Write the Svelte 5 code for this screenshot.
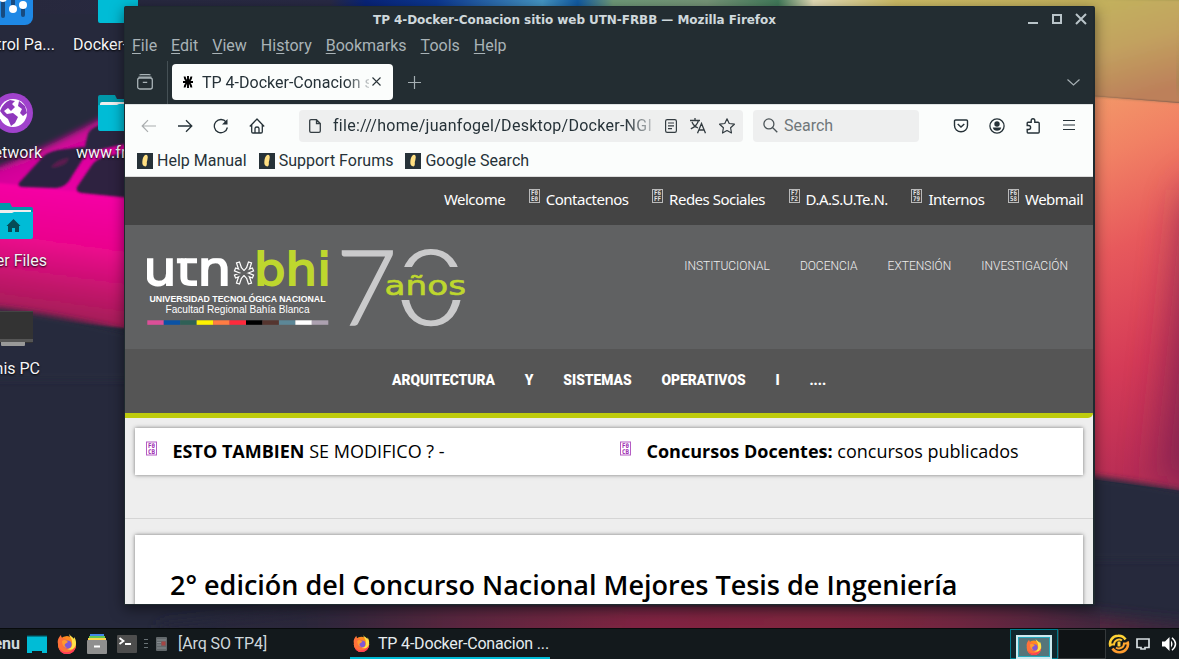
<script>
  const menus = [
    ['', 'F', 'ile'], ['', 'E', 'dit'], ['', 'V', 'iew'], ['Hi', 's', 'tory'],
    ['', 'B', 'ookmarks'], ['', 'T', 'ools'], ['', 'H', 'elp']
  ];
  const bookmarks = ['Help Manual', 'Support Forums', 'Google Search'];
  const quick = [
    { code: ['F0', 'E0'], label: 'Contactenos' },
    { code: ['F6', 'FF'], label: 'Redes Sociales' },
    { code: ['F7', 'F2'], label: 'D.A.S.U.Te.N.' },
    { code: ['F8', '79'], label: 'Internos' },
    { code: ['F6', '58'], label: 'Webmail' }
  ];
  const sections = ['INSTITUCIONAL', 'DOCENCIA', 'EXTENSIÓN', 'INVESTIGACIÓN'];
  const course = ['ARQUITECTURA', 'Y', 'SISTEMAS', 'OPERATIVOS', 'I', '....'];
  const stripes = ['#dc4f98', '#0a52a5', '#2f6056', '#fff200', '#ff7c43', '#ff2a3c', '#000', '#55352f', '#5c8797', '#fff', '#aca1b0'];
</script>

{#snippet hex(code, color)}
  <svg class="hex" width="11" height="14" viewBox="0 0 11 14" fill="none">
    <rect x=".5" y=".5" width="10" height="13" stroke={color} stroke-width="1" opacity=".75" />
    <text x="2" y="6.2" textLength="7" lengthAdjust="spacingAndGlyphs" fill={color}>{code[0]}</text>
    <text x="2" y="12.2" textLength="7" lengthAdjust="spacingAndGlyphs" fill={color}>{code[1]}</text>
  </svg>
{/snippet}

{#snippet fox(size)}
  <svg width={size} height={size} viewBox="0 0 20 20">
    <circle cx="10" cy="11" r="9" fill="#ff8a1f" />
    <path d="M1 10C0 6 2 3 4 1c0 2 1 3 2 3 2 0 3 1 4 2l-3 3 1 4 6 2 5-4c0 5-4 9-9 9S1 16 1 10Z" fill="#ff7139" />
    <path d="M2 14c4 6 12 6 17-2-1 5-4 8-9 8-4 0-7-2-8-6Z" fill="#ff3b58" />
    <path d="M12 0c1 4 3 4 3 8 1 5-2 7-5 7 5 2 9-1 9-6 0-3-1-5-2-6v2c-1-2-4-3-5-5Z" fill="#ffe14a" />
    <circle cx="10.5" cy="10.5" r="4" fill="#8059d6" />
    <path d="M5 7c2-2 4-1 6 1l-3 2c-1 1 0 3 2 4-3 0-5-3-5-7Z" fill="#ff9b2e" />
  </svg>
{/snippet}

{#snippet folder(home)}
  <svg width="40" height="36" viewBox="0 0 40 36">
    <path d="M0 2Q0 0 2 0H17L19 4H38Q40 4 40 6V20H0Z" fill="#0097a9" />
    <path d="M2 9Q2 7 4 7H38V18H2Z" fill="#eee" />
    <path d="M0 11Q0 10 1 10H19L21 9H40V34Q40 36 38 36H2Q0 36 0 34Z" fill="#00bcd6" />
    {#if home}<path d="M20.5 16L27.5 23H26V29H22V25H19V29H15V23H13.5Z" fill="#064b56" />{/if}
  </svg>
{/snippet}

<div class="desktop">
  <svg class="wallpaper" width="1179" height="659" viewBox="0 0 1179 659" preserveAspectRatio="none">
    <defs>
      <linearGradient id="sky" x1="0" x2="1"><stop offset="0" stop-color="#27283c" /><stop offset=".28" stop-color="#292a45" /><stop offset=".31" stop-color="#08247a" /><stop offset=".37" stop-color="#0c3892" /><stop offset=".46" stop-color="#4596c4" /><stop offset=".49" stop-color="#125ca4" /><stop offset=".52" stop-color="#6f9a79" /><stop offset=".6" stop-color="#769578" /><stop offset=".66" stop-color="#427b5b" /><stop offset=".69" stop-color="#e4ddb8" /><stop offset=".76" stop-color="#cdbc66" /><stop offset=".93" stop-color="#c2af5c" /><stop offset="1" stop-color="#98914b" /></linearGradient>
      <linearGradient id="warm" x1="0" y1="0" x2=".12" y2="1"><stop offset="0" stop-color="#f39a69" /><stop offset=".18" stop-color="#f18164" /><stop offset=".42" stop-color="#e7595c" /><stop offset=".72" stop-color="#d53b57" /><stop offset="1" stop-color="#b82d55" /></linearGradient>
      <linearGradient id="olive" x1="0" y1="0" x2=".3" y2="1"><stop offset="0" stop-color="#c3b35d" /><stop offset=".5" stop-color="#c2a25f" /><stop offset="1" stop-color="#bd805a" /></linearGradient>
      <linearGradient id="pink" x1="0" y1="0" x2="-.15" y2="1"><stop offset="0" stop-color="#f500a4" /><stop offset=".35" stop-color="#ea078c" /><stop offset=".65" stop-color="#be1768" /><stop offset="1" stop-color="#8a2347" /></linearGradient>
      <linearGradient id="glow" x1="0" y1="0" x2=".5" y2="1"><stop offset="0" stop-color="#6c1a6e" /><stop offset=".35" stop-color="#b80f8c" /><stop offset=".7" stop-color="#e000a0" /><stop offset="1" stop-color="#f000a5" /></linearGradient>
      <linearGradient id="under" x1="0" x2="1"><stop offset="0" stop-color="#26283b" /><stop offset=".14" stop-color="#2c273b" /><stop offset=".29" stop-color="#5b263f" /><stop offset=".48" stop-color="#802442" /><stop offset=".7" stop-color="#80253e" /><stop offset=".84" stop-color="#692640" /><stop offset=".94" stop-color="#45263e" /><stop offset="1" stop-color="#34263b" /></linearGradient>
      <filter id="edge" x="-20%" y="-20%" width="140%" height="140%"><feGaussianBlur stdDeviation=".9" /></filter>
      <filter id="soft" x="-20%" y="-20%" width="140%" height="140%"><feGaussianBlur stdDeviation="3" /></filter>
      <filter id="haze" x="-20%" y="-20%" width="140%" height="140%"><feGaussianBlur stdDeviation="7" /></filter>
      <filter id="mist" x="-80%" y="-40%" width="260%" height="180%"><feGaussianBlur stdDeviation="22" /></filter>
    </defs>
    <rect width="1179" height="659" fill="#26293c" />
    <rect width="1179" height="14" fill="url(#sky)" />
    <path d="M-20 174C30 156 82 130 150 92V220L-20 210Z" fill="url(#glow)" filter="url(#soft)" />
    <path d="M-10 182L70 191L145 196V330L-10 316Z" fill="url(#pink)" filter="url(#edge)" />
    <g filter="url(#edge)">
      <path d="M85 146L88 134Q90 129 97 126L150 102V140L120 145L98 150Q86 152 85 146Z" fill="#292540" />
      <path d="M19 183L40 160Q46 152 58 150L82 147Q90 146 86 154L72 176Q67 187 56 188L24 187Q17 187 19 183Z" fill="#2a2340" />
      <path d="M77 187L92 165Q97 158 108 156L150 148V200L82 193Q75 192 77 187Z" fill="#2f2140" />
      <path d="M51 167Q58 159 69 158L66 163Q58 168 51 167Z" fill="#5b1f50" />
      <path d="M-10 160L20 158L10 152L-10 158Z" fill="#5b1f50" />
    </g>
    <path d="M-20 306Q50 312 145 336V380H-20Z" fill="#26293c" filter="url(#soft)" />
    <path d="M1080 95L1190 104V492L1080 478Z" fill="url(#warm)" />
    <path d="M1080 0H1190V104L1080 96Z" fill="url(#olive)" filter="url(#edge)" />
    <path d="M1190 190H1250V490H1160Z" fill="#7a2450" opacity=".9" filter="url(#mist)" />
    <path d="M1200 -10V90H1180Z" fill="#8a8848" filter="url(#haze)" />
    <path d="M1060 472Q1120 478 1200 494V560H1060Z" fill="#26293c" filter="url(#soft)" />
    <path d="M160 625L330 607H1020L1200 625V670H160Z" fill="url(#under)" filter="url(#haze)" />
    <rect y="607" x="200" width="900" height="22" fill="url(#under)" opacity=".5" />
  </svg>

  <div class="shortcut" style="left:-25px;top:-12px">
    <svg width="58" height="37" viewBox="0 0 58 37"><rect width="40" height="37" rx="8" x="18" fill="#1e88e5" /><path d="M28 0V28M38 0V18M48 20V27" stroke="#174b80" stroke-width="4" stroke-linecap="round" /><circle cx="38" cy="21" r="4" fill="#fff" /><circle cx="48" cy="17" r="4" fill="#fff" /><circle cx="28" cy="10" r="4" fill="#fff" /></svg>
  </div>
  <div class="shortcut" style="left:98px;top:-13px">{@render folder(false)}</div>
  <div class="shortcut" style="left:-7px;top:93px">
    <svg width="40" height="40" viewBox="0 0 40 40"><circle cx="20" cy="20" r="20" fill="#a042cc" /><circle cx="20" cy="20" r="14" fill="#fff" /><path d="M7 18Q10 10 17 7L22 8L19 11L22 14L18 18L15 15L11 18L14 21L20 20L25 24L22 30L18 33L15 26L10 22ZM26 8L32 13L34 20L30 23L27 20L29 16L25 13Z" fill="#8f38bd" /></svg>
  </div>
  <div class="shortcut" style="left:98px;top:95px">{@render folder(false)}</div>
  <div class="shortcut" style="left:-7px;top:203px">{@render folder(true)}</div>
  <div class="shortcut" style="left:-7px;top:311px">
    <svg width="40" height="37" viewBox="0 0 40 37"><rect width="40" height="32" rx="1.5" fill="#333" /><path d="M0 28H40V31H0Z" fill="#555" /><path d="M0 .5H40" stroke="#444" /><path d="M8 31H32V34Q32 35 31 35H9Q8 35 8 34Z" fill="#999" /></svg>
  </div>
  <span class="caption" style="right:1124px;top:35px">Control Pa...</span>
  <span class="caption" style="left:73px;top:35px">Docker-</span>
  <span class="caption" style="right:1137px;top:143px">Network</span>
  <span class="caption" style="left:76px;top:143px">www.fr</span>
  <span class="caption" style="right:1132px;top:251px">User Files</span>
  <span class="caption" style="right:1139px;top:359px">This PC</span>

  <main class="window">
    <header class="titlebar">
      <span class="wtitle">TP 4-Docker-Conacion sitio web UTN-FRBB — Mozilla Firefox</span>
      <svg width="59" height="12" viewBox="0 0 59 12" fill="none" stroke="#b9c4c9" stroke-width="2"><path d="M0 10H10M48 1L58 11M58 1L48 11" /><rect x="25" y="2" width="8" height="8" /></svg>
    </header>
    <nav class="menubar">
      {#each menus as [a, b, c]}<span>{a}<u>{b}</u>{c}</span>{/each}
    </nav>
    <div class="tabs">
      <div class="recent">
        <svg width="16" height="16" viewBox="0 0 16 16" fill="none" stroke="#a9b3b7" stroke-width="1.3"><path d="M2.5 1Q3 .7 4 .7H12Q13 .7 13.5 1M1.5 3.2H14.5M5.8 8.3H10.2" /><rect x=".7" y="4" width="14.6" height="11" rx="2" /></svg>
      </div>
      <div class="tab">
        <svg width="12" height="12" viewBox="0 0 12 12" fill="none" stroke="#000" stroke-width="1.9"><path d="M6 0V12M1 6H11M2.600 .5Q3 4.200 6 6Q9 4.200 9.400 .5M2.600 11.500Q3 7.800 6 6Q9 7.800 9.400 11.500" /></svg>
        <span class="tabname">TP 4-Docker-Conacion sitio</span>
        <svg width="9" height="9" viewBox="0 0 9 9" stroke="#2b3439" stroke-width="1.1"><path d="M.5 .5L8.5 8.5M8.5 .5L.5 8.5" /></svg>
      </div>
      <svg class="plus" width="13" height="13" viewBox="0 0 13 13" stroke="#a5afb3" stroke-width="1.2"><path d="M6.5 0V13M0 6.5H13" /></svg>
      <svg class="chev" width="13" height="7" viewBox="0 0 13 7" fill="none" stroke="#a5afb3" stroke-width="1.2"><path d="M.5 .5L6.5 6L12.5 .5" /></svg>
    </div>
    <div class="toolbar">
      <div class="navicons">
        <svg width="16" height="16" viewBox="0 0 16 16" fill="none" stroke="#a9adae" stroke-width="1.2"><path d="M15 8H1.5M7 2.2L1.2 8L7 13.8" /></svg>
        <svg width="16" height="16" viewBox="0 0 16 16" fill="none" stroke="#263238" stroke-width="1.3"><path d="M1 8H14.5M9 2.2L14.8 8L9 13.8" /></svg>
        <svg width="16" height="16" viewBox="0 0 16 16" fill="none" stroke="#263238" stroke-width="1.3"><path d="M14.4 9.5A6.6 6.6 0 1 1 13.2 4.1" /><path d="M14.5 1V6.5H9Z" fill="#263238" stroke="none" /></svg>
        <svg width="16" height="16" viewBox="0 0 16 16" fill="none" stroke="#263238" stroke-width="1.3" stroke-linejoin="round"><path d="M.8 8.5L8 1L15.2 8.5M2.7 7V13.8Q2.7 15 4 15H12Q13.3 15 13.3 13.8V7M6 15V10.5Q6 9 8 9T10 10.5V15" /></svg>
      </div>
      <div class="urlbar">
        <svg width="12" height="14" viewBox="0 0 12 14" fill="none" stroke="#343d42" stroke-width="1.3"><path d="M7.5 .7H2Q.7 .7 .7 2V12Q.7 13.3 2 13.3H10Q11.3 13.3 11.3 12V4.5L7.5 .7V4.5H11.3" /></svg>
        <span class="url">file:///home/juanfogel/Desktop/Docker-NGI</span>
        <svg width="12" height="14" viewBox="0 0 12 14" fill="none" stroke="#343d42" stroke-width="1.2"><rect x=".6" y=".6" width="10.8" height="12.8" rx="1.6" /><path d="M3 4H9M3 6.8H9M3 9.6H7" /></svg>
        <svg width="16" height="16" viewBox="0 0 16 16" fill="none" stroke="#343d42" stroke-width="1.3"><path d="M0 2.5H10M5 0V2.5M8.5 2.5Q7 8 .8 10.8M2 4Q3.5 8 8 10M7.5 15.3L11.5 5.5L15.5 15.3M9 12H14" /></svg>
        <svg width="16" height="16" viewBox="0 0 16 16" fill="none" stroke="#343d42" stroke-width="1.2" stroke-linejoin="round"><path d="M8 .8L10.2 5.5L15.4 6.2L11.6 9.8L12.5 15L8 12.5L3.5 15L4.4 9.8L.6 6.2L5.8 5.5Z" /></svg>
      </div>
      <div class="search">
        <svg width="15" height="15" viewBox="0 0 15 15" fill="none" stroke="#4b5357" stroke-width="1.3"><circle cx="5.9" cy="5.9" r="5" /><path d="M9.5 9.5L14.3 14.3" /></svg>
        <span>Search</span>
      </div>
      <div class="tools">
        <svg width="16" height="16" viewBox="0 0 16 16" fill="none" stroke="#263238" stroke-width="1.4"><path d="M2.6 2H13.4Q14.5 2 14.5 3V7.5A6.5 6.3 0 0 1 1.5 7.5V3Q1.5 2 2.6 2ZM4.7 6L8 9L11.3 6" /></svg>
        <svg width="16" height="16" viewBox="0 0 16 16" fill="none" stroke="#263238" stroke-width="1.3"><circle cx="8" cy="8" r="7.1" /><circle cx="8" cy="6" r="2.7" fill="#263238" stroke="none" /><path d="M3.8 9.5H12.2Q11.5 12.8 8 12.8T3.8 9.5Z" fill="#263238" stroke="none" /></svg>
        <svg width="16" height="16" viewBox="0 0 16 16" fill="none" stroke="#263238" stroke-width="1.4"><path d="M2.200 7.500V5Q2.200 4.200 3 4.200H6.200V2.600Q6.200 .7 8 .7T9.800 2.600V4.200H13Q14.200 4.200 14.200 5.300V14Q14.200 15 13.200 15H3Q2.200 15 2.200 14V11.500H3.600Q5.600 11.500 5.600 9.500T3.600 7.500Z" /></svg>
        <svg width="16" height="16" viewBox="0 0 16 16" stroke="#263238" stroke-width="1.2"><path d="M2 2.500H14M2 7H14M2 11.500H14" /></svg>
      </div>
    </div>
    <div class="bookmarks">
      {#each bookmarks as b}
        <span><svg width="16" height="16" viewBox="0 0 16 16"><rect width="16" height="16" fill="#263238" /><path d="M8 2Q10.5 1 10.800 4Q10.500 7 9.800 9Q10.200 13 8.5 13.5Q5 13 5.3 9Q5.5 4 8 2Z" fill="#ffe082" /></svg>{b}</span>
      {/each}
    </div>

    <section class="page">
      <div class="topbar">
        <span class="welcome">Welcome</span>
        {#each quick as q}<span class="q">{@render hex(q.code, '#e2e2e2')}<i>{q.label}</i></span>{/each}
      </div>
      <div class="brand">
        <svg class="logo" width="320" height="80" viewBox="147 248 320 80">
          <defs>
            <clipPath id="xh"><rect x="140" y="258.2" width="95" height="30" /></clipPath>
            <clipPath id="split"><path d="M335 240H398V330H335ZM398 240H480V267H398ZM398 300H480V330H398Z" /></clipPath>
          </defs>
          <g font-family="DejaVu Sans">
            <text x="143" y="285" font-size="48" textLength="88" lengthAdjust="spacingAndGlyphs" fill="#fff" stroke="#fff" stroke-width="1.8" clip-path="url(#xh)">utn</text>
            <text x="254" y="285" font-size="45" textLength="77" lengthAdjust="spacingAndGlyphs" fill="#bed72e" stroke="#bed72e" stroke-width="1.8">bhi</text>
            <text x="384.500" y="294.500" font-size="27" textLength="81.500" lengthAdjust="spacingAndGlyphs" fill="#bed72e" stroke="#bed72e" stroke-width=".6">años</text>
          </g>
          <g fill="none" stroke-linejoin="round">
            {#each [['#fff', 4.4], ['#606162', 2]] as [c, w]}
              <path d="M238.500 264L240 268.500L244 273L248 268.500L249.500 264M238.500 282L240 277.500L244 273L248 277.500L249.500 282M236.500 270L244 273L251.500 270M236.500 276L244 273L251.500 276" stroke={c} stroke-width={w} stroke-linecap="square" />
            {/each}
          </g>
          <g font-family="Lato" font-weight="300" font-size="104" fill="#cacacb" stroke="#cacacb" stroke-width="1.6" clip-path="url(#split)">
            <text x="336" y="324.500" textLength="61" lengthAdjust="spacingAndGlyphs">7</text>
            <text x="397" y="325" textLength="68" lengthAdjust="spacingAndGlyphs">0</text>
          </g>
          <g font-family="Liberation Sans" fill="#fff">
            <text x="149.500" y="302" font-size="9.7" font-weight="700" textLength="176" lengthAdjust="spacingAndGlyphs">UNIVERSIDAD TECNOLÓGICA NACIONAL</text>
            <text x="165.500" y="313.200" font-size="10" textLength="144" lengthAdjust="spacingAndGlyphs">Facultad Regional Bahía Blanca</text>
          </g>
          {#each stripes as c, i}<rect x={147.3 + i * 16.45} y="320.3" width="16.5" height="4.500" fill={c} />{/each}
        </svg>
        <nav>{#each sections as s}<span>{s}</span>{/each}</nav>
      </div>
      <div class="course">{#each course as c}<b>{c}</b>{/each}</div>
      <div class="lower">
        <div class="news">
          <span class="n">{@render hex(['F0', 'CB'], '#9c27b0')}<i><b>ESTO TAMBIEN</b> SE MODIFICO ? -</i></span>
          <span class="n">{@render hex(['F0', 'CB'], '#9c27b0')}<i><b>Concursos Docentes:</b> concursos publicados</i></span>
        </div>
        <hr />
        <article><h1>2° edición del Concurso Nacional Mejores Tesis de Ingeniería</h1></article>
      </div>
    </section>
  </main>

  <footer class="panel">
    <div class="launch">
      <b>Menu</b>
      <svg width="20" height="18" viewBox="0 0 20 18"><path d="M0 0H20V18H15V16H5V18H0Z" fill="#00bcd6" /><path d="M0 0H20V1.500H0Z" fill="#053f48" /></svg>
      {@render fox(20)}
      <svg width="20" height="20" viewBox="0 0 20 20"><path d="M3 0H17V3H3Z" fill="#4285e8" /><path d="M2 2H18V5H2Z" fill="#61c454" /><path d="M1 4H19V8H1Z" fill="#fcd44f" /><rect y="6" width="20" height="14" rx="1" fill="#8f8f8f" /><path d="M7 11.500H13V13.500H7Z" fill="#fff" /></svg>
      <svg width="20" height="18" viewBox="0 0 20 18"><rect width="20" height="18" rx="1" fill="#4d4d4d" /><path d="M2.500 3L6.500 6L2.500 9M8 9H14" stroke="#fff" stroke-width="1.800" fill="none" /></svg>
    </div>
    <svg class="grip" width="4" height="10" viewBox="0 0 4 10" stroke="#697276"><path d="M0 .5H4M0 4.500H4M0 8.500H4" /></svg>
    <svg class="doc" width="11" height="14" viewBox="0 0 11 14"><rect width="11" height="14" rx="1" fill="#62686b" /><path d="M1 3H10M1 5.500H5M1 8H5M1 11H10" stroke="#91979a" stroke-width=".8" /><rect x="5.500" y="4.500" width="4" height="4" fill="#a44444" /></svg>
    <span class="task">[Arq SO TP4]</span>
    <div class="active">{@render fox(17)}<span>TP 4-Docker-Conacion ...</span></div>
    <div class="pager">
      <div class="ws on"><div class="mini">{@render fox(16)}</div></div>
      <div class="ws"></div>
    </div>
    <div class="tray">
      <svg width="22" height="20" viewBox="0 0 22 20" fill="none"><path d="M2.500 12.500A8 8 0 0 1 10 1.800Q15 1.500 17.500 5.500" stroke="#ffd335" stroke-width="2.600" /><path d="M19.500 7.500A8 8 0 0 1 12 18.200Q7 18.500 4.500 14.500" stroke="#ff9c2e" stroke-width="2.600" /><path d="M1 10.500H6A5 5 0 0 1 14 6.500" stroke="#ffc52e" stroke-width="2" /><path d="M21 9.500H16A5 5 0 0 1 8 13.500" stroke="#ffa52e" stroke-width="2" /><path d="M11 7.500V12.500" stroke="#ffce39" stroke-width="3" /></svg>
      <svg width="14" height="12" viewBox="0 0 14 12" fill="none" stroke="#d9e0e2" stroke-width="1.700"><path d="M1 1H13V9.500H9V11H5V9.500H1Z" /></svg>
      <svg class="vol" width="15" height="14" viewBox="0 0 15 14" fill="none"><path d="M0 4.500H3L7.500 0V14L3 9.500H0Z" fill="#fff" /><path d="M9 3.500Q12 7 9 10.500" fill="#fff" /><path d="M10 .8Q17 7 10 13.200" stroke="#fff" stroke-width="1.500" /></svg>
    </div>
  </footer>
</div>

<style>
  :global(body) { margin: 0; overflow: hidden; }
  .desktop { position: relative; width: 1179px; height: 659px; overflow: hidden; font: 16px/20px Roboto, sans-serif; background: #26293c; }
  .desktop * { box-sizing: border-box; }
  svg { display: block; flex: none; }
  i { font-style: normal; }
  .wallpaper { position: absolute; left: 0; top: 0; }
  .shortcut { position: absolute; }
  .caption { position: absolute; color: #f5f5f7; white-space: nowrap; text-shadow: 0 1px 2px #000; }
  .window { position: absolute; left: 124px; top: 6px; width: 971px; height: 599px; background: #232d32; border: 1px solid #1f2a2f; border-right-width: 2px; border-radius: 2px 2px 0 0; box-shadow: 0 4px 14px rgba(0, 0, 0, .5); overflow: hidden; display: flex; flex-direction: column; white-space: nowrap; }
  .titlebar { height: 26px; flex: none; display: flex; justify-content: space-between; padding: 6px 6px 0 248px; }
  .wtitle { font: bold 12px/14px "DejaVu Sans", sans-serif; letter-spacing: -.06px; color: #cfd8dc; }
  .menubar { height: 28px; flex: none; display: flex; gap: 14px; padding: 3px 0 0 7px; color: #a9b3b7; }
  .menubar u { text-underline-offset: 2px; text-decoration-thickness: 1px; }
  .tabs { height: 43px; flex: none; display: flex; align-items: center; padding-bottom: 1px; }
  .recent { width: 43px; height: 43px; padding: 13px 0 0 12px; border-right: 1px solid #455055; }
  .tab { margin: -1px 0 0 4px; width: 221px; height: 36px; border-radius: 4px; background: #fbfdfc; display: flex; align-items: center; padding: 0 12px 0 10px; color: #263238; }
  .tabname { margin: 0 3px 0 8px; padding-top: 2px; flex: 1; min-width: 0; overflow: hidden; mask-image: linear-gradient(90deg, #000 86%, transparent 104%); }
  .plus { margin-left: 15px; }
  .chev { margin: 0 13px 0 auto; }
  .toolbar { height: 42px; flex: none; display: flex; align-items: center; background: #fbfdfc; border-top: 1px solid #dfe3e3; }
  .navicons { display: flex; gap: 20px; padding-left: 16px; }
  .urlbar { margin-left: 34px; width: 444px; height: 32px; border-radius: 4px; background: #eeefef; display: flex; align-items: center; padding: 0 8px 0 10px; color: #263238; }
  .url { margin: 0 11px 0 12px; width: 321px; overflow: hidden; letter-spacing: .27px; mask-image: linear-gradient(90deg, #000 91%, transparent 102%); }
  .urlbar svg + svg { margin-left: 13px; }
  .search { margin-left: 10px; width: 166px; height: 32px; border-radius: 4px; background: #eeefef; display: flex; align-items: center; gap: 6px; padding-left: 10px; color: #70777a; }
  .tools { display: flex; gap: 20px; margin-left: 34px; }
  .bookmarks { height: 31px; flex: none; display: flex; gap: 12px; padding: 5px 0 0 12px; background: #fbfdfc; color: #263238; border-bottom: 1px solid #ddd; }
  .bookmarks span { display: flex; align-items: center; gap: 4px; height: 20px; }
  .page { flex: 1; min-height: 0; background: #eee; overflow: hidden; font-family: "Open Sans", sans-serif; }
  .topbar { height: 48px; background: #444; display: flex; justify-content: flex-end; gap: 23.6px; padding: 12px 10px 0 0; color: #fff; font: 15px/20px "Noto Sans", sans-serif; letter-spacing: -.5px; }
  .q { display: flex; gap: 6px; }
  .hex { font: bold 6.5px "DejaVu Sans Mono", monospace; letter-spacing: 0; }
  .brand { height: 124px; background: #606162; display: flex; justify-content: space-between; padding: 23px 25px 0 22px; }
  .brand nav { display: flex; gap: 30px; padding-top: 8px; font: 300 12px/20px Roboto, sans-serif; color: #eee; }
  .course { height: 69px; background: #555; border-bottom: 5px solid #becb0d; border-radius: 0 0 5px 0; display: flex; gap: 29.8px; padding: 21px 0 0 267px; color: #fff; font: bold 13.85px/20px Roboto, sans-serif; }
  .lower { padding: 10px 10px 0; color: #000; }
  .news { height: 47px; background: #fff; box-shadow: 0 0 4px #777; display: grid; grid-template-columns: 474px 1fr; padding-left: 11px; font-size: 18px; line-height: 47px; }
  .n { display: flex; gap: 15.5px; }
  .n .hex { margin-top: 12px; width: 11px; height: 17px; }
  hr { margin: 43px -10px 16px; border: 0; border-top: 1px solid #d5d5d5; height: 1px; }
  article { background: #fff; height: 90px; box-shadow: 0 0 4px #777; padding: 30px 35px; }
  h1 { margin: 0; font: 600 27px/40px "Open Sans", sans-serif; }
  .panel { position: absolute; left: 0; bottom: 0; width: 1179px; height: 31px; background: #13191c; border-top: 1px solid #080b0c; display: flex; align-items: center; white-space: nowrap; color: #cfd8dc; }
  .launch { display: flex; align-items: center; gap: 10px; margin-left: -20px; width: 157px; }
  .launch b { width: 40px; margin-right: -3px; direction: rtl; }
  .grip { margin: 0 8px 0 7px; }
  .doc { margin-right: 11px; }
  .task { width: 172px; letter-spacing: -.08px; }
  .active { width: 200px; height: 30px; border-bottom: 2px solid #00bcd6; display: flex; align-items: center; gap: 8px; padding: 1px 0 0 3px; color: #e6ecef; letter-spacing: -.18px; }
  .pager { display: flex; margin-left: 460px; height: 30px; }
  .ws { width: 48px; border: 1px solid #35393b; background: #0f1315; }
  .ws.on { border-color: #007c8d; background: #10272d; padding: 5px; }
  .mini { height: 24px; border: 2px solid #cde9ee; background: #55757a; display: grid; place-items: center; outline: 1px solid #25aabe; outline-offset: -3px; }
  .tray { display: flex; align-items: center; gap: 6px; margin-left: 2px; }
  .vol { margin-left: 6px; }
</style>
